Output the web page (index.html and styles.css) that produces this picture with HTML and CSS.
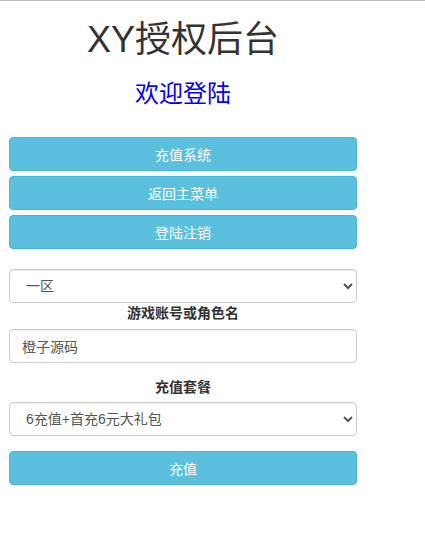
FILE: index.html
```html
<!DOCTYPE html>
<html lang="zh-CN">
<head>
<meta charset="utf-8">
<title>XY授权后台</title>
<link rel="stylesheet" href="styles.css">
</head>
<body>
<div class="page">
  <h1 class="title">XY授权后台</h1>
  <h2 class="welcome">欢迎登陆</h2>
  <div class="menu">
    <button class="btn">充值系统</button>
    <button class="btn">返回主菜单</button>
    <button class="btn">登陆注销</button>
  </div>
  <form class="form">
    <select class="field select">
      <option>一区</option>
    </select>
    <label class="label">游戏账号或角色名</label>
    <input class="field input" type="text" value="橙子源码">
    <label class="label label-gap">充值套餐</label>
    <select class="field select">
      <option>6充值+首充6元大礼包</option>
    </select>
    <button type="button" class="btn submit">充值</button>
  </form>
</div>
</body>
</html>
```

FILE: styles.css
```css
* { box-sizing: border-box; }
html, body {
  margin: 0;
  padding: 0;
  background: #fff;
}
body {
  border-top: 1px solid #bdbdbd;
  font-family: "Liberation Sans", "Noto Sans CJK SC", sans-serif;
  font-size: 14px;
  color: #333;
}
.page {
  width: 348px;
  margin-left: 9px;
  display: flex;
  flex-direction: column;
}
.title {
  margin: 19px 0 0;
  font-size: 36px;
  font-weight: normal;
  line-height: 40px;
  text-align: center;
  color: #333;
}
.welcome {
  margin: 20px 0 0;
  font-size: 24px;
  font-weight: normal;
  line-height: 28px;
  text-align: center;
  color: #0000ee;
}
.menu {
  margin-top: 29px;
  display: flex;
  flex-direction: column;
  gap: 5px;
}
.btn {
  display: block;
  width: 100%;
  height: 34px;
  margin: 0;
  padding: 0 12px;
  font-family: inherit;
  font-size: 14px;
  color: #fff;
  background: #5bc0de;
  border: 1px solid #46b8da;
  border-radius: 4px;
  text-align: center;
}
.form {
  margin-top: 20px;
  display: flex;
  flex-direction: column;
}
.field {
  display: block;
  width: 100%;
  height: 34px;
  margin: 0;
  font-family: inherit;
  font-size: 14px;
  color: #555;
  background: #fff;
  border: 1px solid #ccc;
  border-radius: 4px;
  box-shadow: inset 0 1px 1px rgba(0,0,0,.075);
}
.select {
  padding: 0 8px 0 12px;
}
.input {
  padding: 0 12px;
}
.label {
  display: block;
  text-align: center;
  font-weight: bold;
  line-height: 20px;
  margin: 0 0 6px;
  color: #333;
}
.label-gap {
  margin-top: 14px;
  margin-bottom: 5px;
}
.submit {
  margin-top: 15px;
}
```
